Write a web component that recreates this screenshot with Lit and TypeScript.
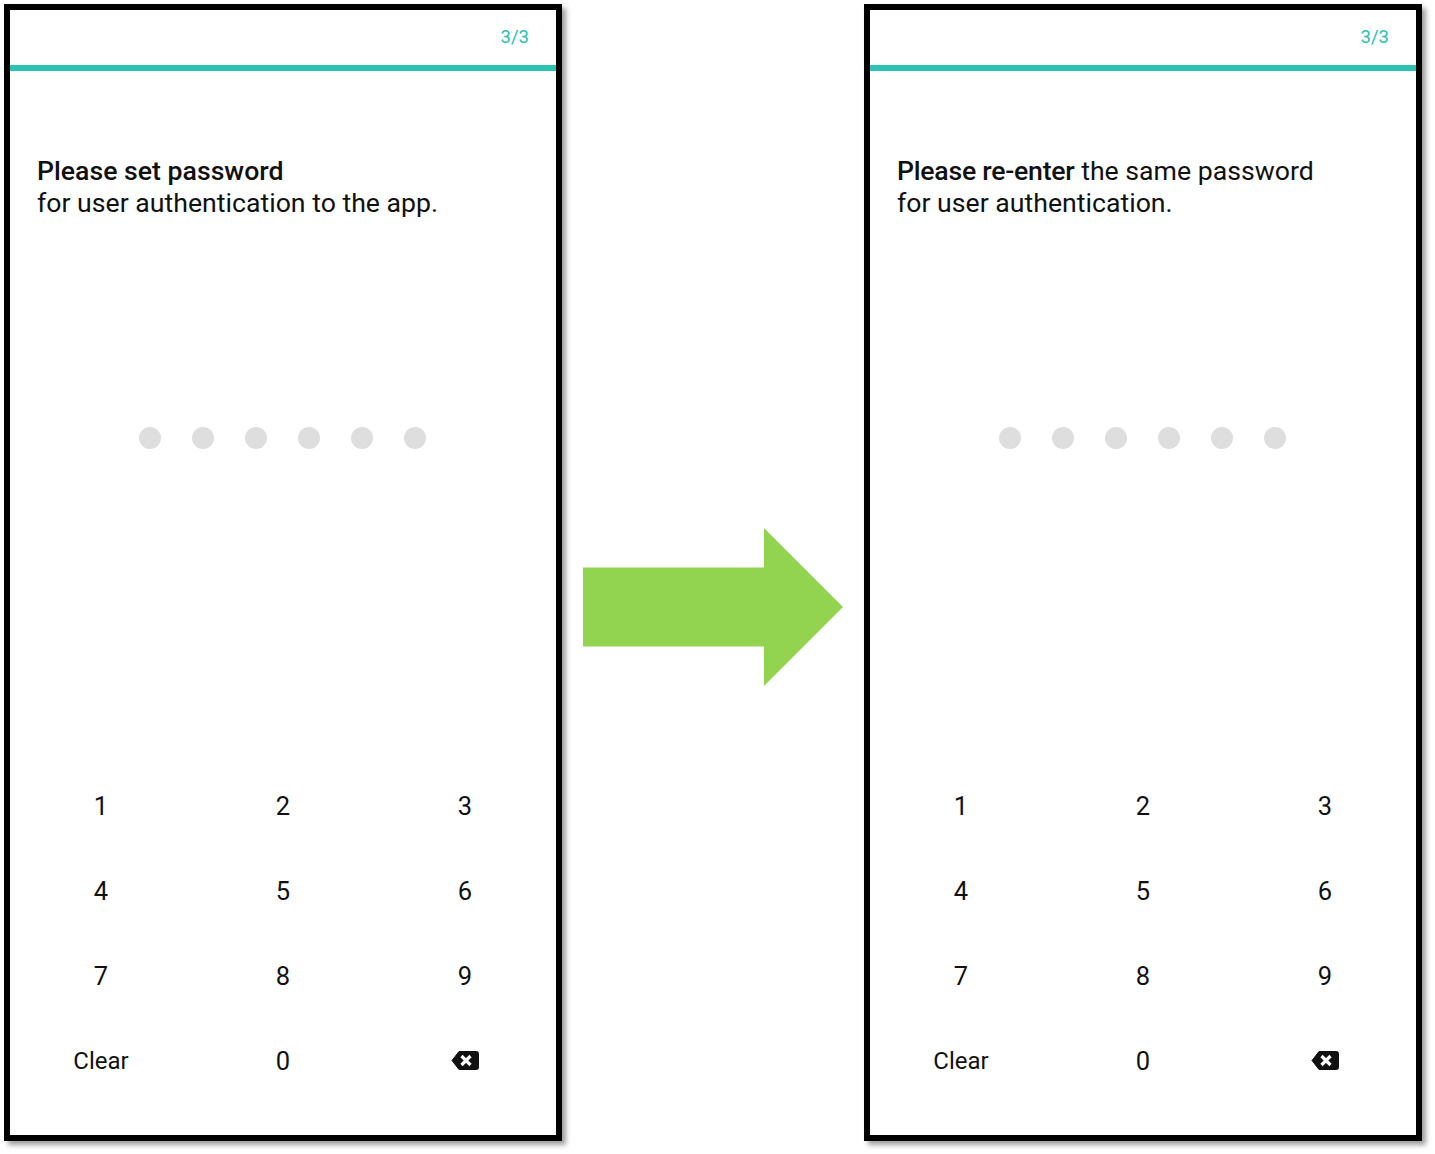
import { LitElement, html, css } from "lit";
import { customElement, property } from "lit/decorators.js";

const KEYS = ["1", "2", "3", "4", "5", "6", "7", "8", "9", "Clear", "0"];

@customElement("pin-screen")
export class PinScreen extends LitElement {
  @property() strong = "";
  @property() rest = "";
  @property() second = "";

  static styles = css`
    :host {
      display: block;
      box-sizing: border-box;
      width: 558px;
      height: 1137px;
      border: 6px solid #000;
      background: #fff;
      box-shadow: 4px 4px 5px rgba(0, 0, 0, 0.38);
      font-family: Roboto, sans-serif;
      color: #111;
    }
    .top {
      height: 55px;
      padding: 17px 27px 0 0;
      box-sizing: border-box;
      text-align: right;
      font-size: 18.5px;
      line-height: 21px;
      color: #2bc0b0;
    }
    .bar {
      height: 6px;
      background: #2bc4b2;
    }
    .msg {
      padding: 85px 27px 0;
      font-size: 26.67px;
      line-height: 31.5px;
      height: 147px;
      box-sizing: border-box;
    }
    .msg b {
      font-weight: 500;
    }
    :host([tight]) .msg b {
      letter-spacing: -0.25px;
    }
    .dots {
      display: flex;
      justify-content: center;
      gap: 31.2px;
      margin-top: 209px;
      padding-right: 1px;
    }
    .dots i {
      width: 22px;
      height: 22px;
      border-radius: 50%;
      background: #dedede;
    }
    .keys {
      display: grid;
      grid-template-columns: repeat(3, 182px);
      grid-auto-rows: 85px;
      margin-top: 314px;
    }
    .keys div {
      display: flex;
      align-items: center;
      justify-content: center;
      font-size: 25.5px;
    }
    .keys .word {
      font-size: 24px;
    }
    .keys svg {
      width: 28px;
      height: 21px;
    }
  `;

  render() {
    return html`
      <div class="top">3/3</div>
      <div class="bar"></div>
      <div class="msg">
        <b>${this.strong}</b>${this.rest}<br />${this.second}
      </div>
      <div class="dots">${[0, 1, 2, 3, 4, 5].map(() => html`<i></i>`)}</div>
      <div class="keys">
        ${KEYS.map(
          (k) => html`<div class=${k.length > 1 ? "word" : ""}>${k}</div>`
        )}
        <div>
          <svg viewBox="0 0 28 21">
            <path
              fill="#111"
              stroke="#111"
              stroke-linejoin="round"
              d="M8 1.5h17.5a2 2 0 0 1 2 2v14a2 2 0 0 1-2 2H8L1 10.5z"
            />
            <path
              stroke="#fff"
              stroke-width="3.2"
              fill="none"
              d="M10.5 6l9 9M19.5 6l-9 9"
            />
          </svg>
        </div>
      </div>
    `;
  }
}

@customElement("app-root")
export class AppRoot extends LitElement {
  static styles = css`
    :host {
      display: flex;
      align-items: flex-start;
      width: 1435px;
      height: 1154px;
      padding: 4px 0 0 4px;
      box-sizing: border-box;
      background: #fff;
      overflow: hidden;
    }
    .arrow {
      flex: none;
      width: 260px;
      height: 158px;
      margin: 524px 21px 0;
    }
  `;

  render() {
    return html`
      <pin-screen
        strong="Please set password"
        second="for user authentication to the app."
      ></pin-screen>
      <svg class="arrow" viewBox="0 0 260 158">
        <path fill="#92d450" d="M0 39.5h181V0l79 79-79 79v-39.5H0z" />
      </svg>
      <pin-screen
        tight
        strong="Please re-enter"
        rest=" the same password"
        second="for user authentication."
      ></pin-screen>
    `;
  }
}
